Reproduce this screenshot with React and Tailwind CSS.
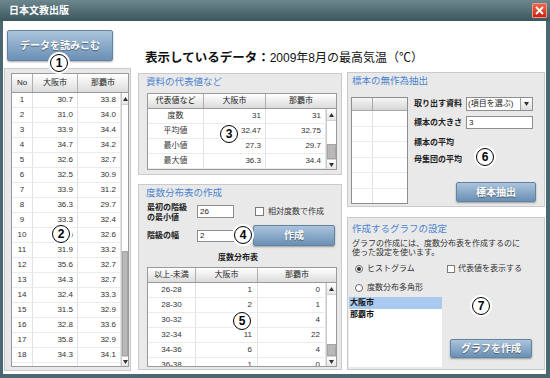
import React from 'react';

const Up = () => (
  <svg width="5" height="4" viewBox="0 0 5 4"><path d="M2.5 0L5 4H0z" fill="#333" /></svg>
);
const Down = () => (
  <svg width="5" height="4" viewBox="0 0 5 4"><path d="M0 0H5L2.5 4z" fill="#333" /></svg>
);

function Scroll({ w, thumb }) {
  return (
    <div className={`flex flex-col shrink-0 border-l border-[#c9c9c9] bg-white ${w}`}>
      <div className="h-[12px] flex items-center justify-center bg-gradient-to-b from-white to-[#e6e6e6] border-b border-[#d2d2d2]">
        <Up />
      </div>
      <div className="flex-1" />
      <div className={`${thumb} bg-[#b8b8b8] border border-[#a4a4a4]`} />
      <div className="h-[10px] flex items-center justify-center bg-gradient-to-b from-white to-[#e6e6e6] border-t border-[#d2d2d2]">
        <Down />
      </div>
    </div>
  );
}

function DataTable({ size, headH, hcols, bcols, aligns, header, rows, sbW, thumb }) {
  return (
    <div className={`flex flex-col overflow-hidden border border-[#9a9a9a] bg-white ${size}`}>
      <div className={`flex shrink-0 border-b border-[#9a9a9a] bg-gradient-to-b from-white to-[#dcdcdc] text-[8px] text-[#222] ${headH}`}>
        {header.map((h, i) => (
          <div key={i} className={`flex items-center justify-center ${i < header.length - 1 ? 'border-r border-[#b0b0b0]' : ''} ${hcols[i]}`}>
            {h}
          </div>
        ))}
      </div>
      <div className="flex flex-1 min-h-0">
        <div className="flex-1 overflow-hidden">
          {rows.map((r, ri) => (
            <div key={ri} className="flex h-[15px] shrink-0 border-b border-[#ebebeb] text-[8px] text-[#333]">
              {r.map((c, ci) => (
                <div key={ci} className={`flex items-center border-r border-[#e2e2e2] ${bcols[ci]} ${aligns[ci]}`}>
                  {c}
                </div>
              ))}
            </div>
          ))}
        </div>
        <Scroll w={sbW} thumb={thumb} />
      </div>
    </div>
  );
}

function Btn({ className, children }) {
  return (
    <div className={`flex items-center justify-center rounded-[2px] border border-[#62849f] bg-gradient-to-b from-[#abc4dc] to-[#6a90b5] shadow-[0_1px_2px_rgba(0,0,0,0.35)] text-white font-bold text-[10px] [text-shadow:0_1px_1px_rgba(0,0,0,0.45)] ${className}`}>
      {children}
    </div>
  );
}

function Mark({ n, pos }) {
  return (
    <div className={`absolute w-[18px] h-[18px] rounded-full bg-white border-[1.5px] border-black shadow-[0_0_0_2px_white] flex items-center justify-center text-[12px] font-bold leading-none text-black ${pos}`}>
      {n}
    </div>
  );
}

const leftRows = [
  ['1', '30.7', '33.8'], ['2', '31.0', '34.0'], ['3', '33.9', '34.4'], ['4', '34.7', '34.2'],
  ['5', '32.6', '32.7'], ['6', '32.5', '30.9'], ['7', '33.9', '31.2'], ['8', '36.3', '29.7'],
  ['9', '33.3', '32.4'], ['10', '33.6', '32.6'], ['11', '31.9', '33.2'], ['12', '35.6', '32.7'],
  ['13', '34.3', '32.7'], ['14', '32.4', '33.3'], ['15', '31.5', '32.9'], ['16', '32.8', '33.6'],
  ['17', '35.8', '32.9'], ['18', '34.3', '34.1'], ['19', '34.0', '33.3'],
];

const statRows = [
  ['度数', '31', '31'], ['平均値', '32.47', '32.75'], ['最小値', '27.3', '29.7'],
  ['最大値', '36.3', '34.4'], ['範囲', '9.0', '4.7'],
];

const freqRows = [
  ['26-28', '1', '0'], ['28-30', '2', '1'], ['30-32', '8', '4'], ['32-34', '11', '22'],
  ['34-36', '6', '4'], ['36-38', '1', '0'],
];

const Label = ({ className, children }) => (
  <div className={`text-[8px] font-bold text-[#222] ${className}`}>{children}</div>
);

export default function App() {
  return (
    <div className="relative w-[550px] h-[378px] flex flex-col bg-white overflow-hidden font-['Liberation_Sans','Noto_Sans_CJK_JP',sans-serif]">
      <div className="h-[21px] shrink-0 flex items-center justify-between pl-[9px] pr-[3px] bg-gradient-to-b from-[#6c878e] to-[#3c575e]">
        <span className="text-white text-[10px] font-bold">日本文教出版</span>
        <div className="w-[15px] h-[15px] flex items-center justify-center rounded-[1px] border border-[#f29a8a] bg-gradient-to-b from-[#f0654c] to-[#c8200c]">
          <svg width="9" height="9" viewBox="0 0 9 9"><path d="M1 1L8 8M8 1L1 8" stroke="white" strokeWidth="1.8" /></svg>
        </div>
      </div>

      <div className="flex-1 flex border-l-[3px] border-r-[4px] border-b-[4px] border-[#4b6871] bg-white">
        {/* left column */}
        <div className="ml-[1px] w-[127px] flex flex-col shrink-0">
          <Btn className="ml-[3px] mt-[9px] w-[106px] h-[31px]">データを読みこむ</Btn>
          <div className="mt-[7px] h-[303px] bg-[#e8e8e8] border border-[#c6cbcf] pl-[6px] pr-[1px] pt-[4px]">
            <DataTable
              size="w-[118px] h-[294px]"
              headH="h-[19px]"
              hcols={['w-[21px]', 'w-[45px]', 'flex-1']}
              bcols={['w-[21px]', 'w-[45px]', 'flex-1']}
              aligns={['justify-center', 'justify-end pr-[4px]', 'justify-end pr-[4px]']}
              header={['No', '大阪市', '那覇市']}
              rows={leftRows}
              sbW="w-[7px]"
              thumb="h-[105px]"
            />
          </div>
        </div>

        {/* right area */}
        <div className="flex-1 flex flex-col">
          <div className="h-[51px] pl-[14px] pt-[29px] flex items-baseline leading-[16px] text-[#111]">
            <span className="text-[12.5px] font-bold">表示しているデータ：</span>
            <span className="text-[12px]">2009年8月の最高気温（℃）</span>
          </div>
          <div className="flex">
            {/* middle column */}
            <div className="ml-[7px] w-[204px] flex flex-col">
              <div className="mt-[1px] h-[102px] bg-[#e9e9e9] border border-[#c6cbcf] flex flex-col">
                <div className="pt-[2px] pl-[7px] h-[14px] leading-[12px] text-[9.5px] text-[#4c84cf]">資料の代表値など</div>
                <div className="mt-[5px] ml-[8px]">
                  <DataTable
                    size="w-[190px] h-[77px]"
                    headH="h-[15px]"
                    hcols={['w-[56px]', 'w-[62px]', 'flex-1']}
                    bcols={['w-[56px]', 'w-[62px]', 'flex-1']}
                    aligns={['justify-center', 'justify-end pr-[4px]', 'justify-end pr-[4px]']}
                    header={['代表値など', '大阪市', '那覇市']}
                    rows={statRows}
                    sbW="w-[10px]"
                    thumb="h-[15px]"
                  />
                </div>
              </div>

              <div className="mt-[9px] h-[186px] bg-[#e9e9e9] border border-[#c6cbcf] flex flex-col">
                <div className="pt-[2px] pl-[7px] h-[14px] leading-[12px] text-[9.5px] text-[#4c84cf]">度数分布表の作成</div>
                <div className="mt-[4px] flex items-start h-[20px]">
                  <Label className="w-[58px] pl-[8px] leading-[10px]">最初の階級<br />の最小値</Label>
                  <div className="mt-[2px] w-[37px] h-[13px] bg-white border border-[#8e8e8e] text-[8px] leading-[11px] pl-[2px] text-[#222]">26</div>
                  <div className="ml-[21px] mt-[4px] w-[9px] h-[9px] bg-white border border-[#7a7a7a]" />
                  <div className="ml-[4px] mt-[3px] text-[8px] leading-[11px] text-[#333]">相対度数で作成</div>
                </div>
                <div className="mt-[2px] flex items-center h-[21px]">
                  <Label className="w-[58px] pl-[8px]">階級の幅</Label>
                  <div className="w-[51px] h-[12px] bg-white border border-[#8e8e8e] text-[8px] leading-[10px] pl-[2px] text-[#222]">2</div>
                  <Btn className="ml-[5px] w-[82px] h-[21px]">作成</Btn>
                </div>
                <div className="h-[21px] pt-[3px] w-[198px] flex items-center justify-center text-[8px] font-bold text-[#222]">度数分布表</div>
                <div className="ml-[8px]">
                  <DataTable
                    size="w-[190px] h-[100px]"
                    headH="h-[15px]"
                    hcols={['w-[48px]', 'w-[62px]', 'flex-1']}
                    bcols={['w-[48px]', 'w-[62px]', 'flex-1']}
                    aligns={['justify-center', 'justify-end pr-[5px]', 'justify-end pr-[5px]']}
                    header={['以上-未満', '大阪市', '那覇市']}
                    rows={freqRows}
                    sbW="w-[10px]"
                    thumb="h-[12px]"
                  />
                </div>
              </div>
            </div>

            {/* right column */}
            <div className="ml-[5px] w-[198px] flex flex-col">
              <div className="h-[135px] bg-[#e9e9e9] border border-[#c6cbcf] flex flex-col">
                <div className="pt-[2px] pl-[4px] h-[14px] leading-[12px] text-[9.5px] text-[#4c84cf]">標本の無作為抽出</div>
                <div className="mt-[10px] flex">
                  <div className="ml-[3px] w-[57px] h-[107px] bg-white border border-[#8e8e8e] flex flex-col overflow-hidden">
                    <div className="h-[13px] shrink-0 flex bg-gradient-to-b from-[#f6f6f6] to-[#d6d6d6] border-b border-[#a8a8a8]">
                      <div className="w-[21px] border-r border-[#a8a8a8]" />
                      <div className="flex-1" />
                    </div>
                    {[0, 1, 2, 3, 4, 5].map((i) => (
                      <div key={i} className="h-[15.5px] shrink-0 flex border-b border-[#ececec]">
                        <div className="w-[21px] border-r border-[#e0e0e0]" />
                        <div className="flex-1" />
                      </div>
                    ))}
                  </div>
                  <div className="ml-[6px] flex flex-col">
                    <div className="flex items-center h-[14px]">
                      <Label className="w-[52px]">取り出す資料</Label>
                      <div className="w-[67px] h-[14px] bg-white border border-[#8e8e8e] flex">
                        <div className="flex-1 text-[8px] leading-[12px] pl-[1px] text-[#222]">(項目を選ぶ)</div>
                        <div className="w-[12px] border-l border-[#a0a0a0] bg-gradient-to-b from-white to-[#dedede] flex items-center justify-center"><Down /></div>
                      </div>
                    </div>
                    <div className="mt-[5px] flex items-center h-[13px]">
                      <Label className="w-[52px]">標本の大きさ</Label>
                      <div className="w-[67px] h-[13px] bg-white border border-[#8e8e8e] text-[8px] leading-[11px] pl-[2px] text-[#222]">3</div>
                    </div>
                    <Label className="mt-[7px] h-[13px] leading-[13px]">標本の平均</Label>
                    <Label className="mt-[5px] h-[12px] leading-[12px]">母集団の平均</Label>
                    <Btn className="mt-[16px] ml-[42px] w-[80px] h-[20px]">標本抽出</Btn>
                  </div>
                </div>
              </div>

              <div className="mt-[10px] h-[153px] bg-[#e9e9e9] border border-[#c6cbcf] flex flex-col">
                <div className="pt-[5px] pl-[4px] h-[17px] leading-[12px] text-[9.5px] text-[#4c84cf]">作成するグラフの設定</div>
                <div className="mt-[4px] pl-[4px] text-[8px] leading-[9px] text-[#333]">
                  グラフの作成には、度数分布表を作成するのに<br />使った設定を使います。
                </div>
                <div className="mt-[6px] h-[12px] flex items-center">
                  <div className="ml-[7px] w-[92px] flex items-center">
                    <div className="w-[8px] h-[8px] rounded-full bg-white border border-[#6a6a6a] flex items-center justify-center">
                      <div className="w-[4px] h-[4px] rounded-full bg-[#333]" />
                    </div>
                    <span className="ml-[4px] text-[8px] text-[#333]">ヒストグラム</span>
                  </div>
                  <div className="w-[8px] h-[8px] bg-white border border-[#7a7a7a]" />
                  <span className="ml-[3px] text-[8px] text-[#333]">代表値を表示する</span>
                </div>
                <div className="mt-[7px] h-[12px] flex items-center">
                  <div className="ml-[7px] w-[8px] h-[8px] rounded-full bg-white border border-[#6a6a6a]" />
                  <span className="ml-[4px] text-[8px] text-[#333]">度数分布多角形</span>
                </div>
                <div className="mt-[3px] flex">
                  <div className="ml-[1px] w-[93px] h-[70px] bg-white text-[8px] font-bold text-[#111]">
                    <div className="h-[12px] leading-[12px] pl-[1px] bg-[#a9c9ef]">大阪市</div>
                    <div className="h-[12px] leading-[12px] pl-[1px]">那覇市</div>
                  </div>
                  <Btn className="ml-[8px] mt-[42px] w-[82px] h-[19px]">グラフを作成</Btn>
                </div>
              </div>
            </div>
          </div>
        </div>
      </div>

      <Mark n="1" pos="left-[50px] top-[54px]" />
      <Mark n="2" pos="left-[52px] top-[225px]" />
      <Mark n="3" pos="left-[220px] top-[125px]" />
      <Mark n="4" pos="left-[234px] top-[226px]" />
      <Mark n="5" pos="left-[233px] top-[312px]" />
      <Mark n="6" pos="left-[476px] top-[148px]" />
      <Mark n="7" pos="left-[472px] top-[297px]" />
    </div>
  );
}
